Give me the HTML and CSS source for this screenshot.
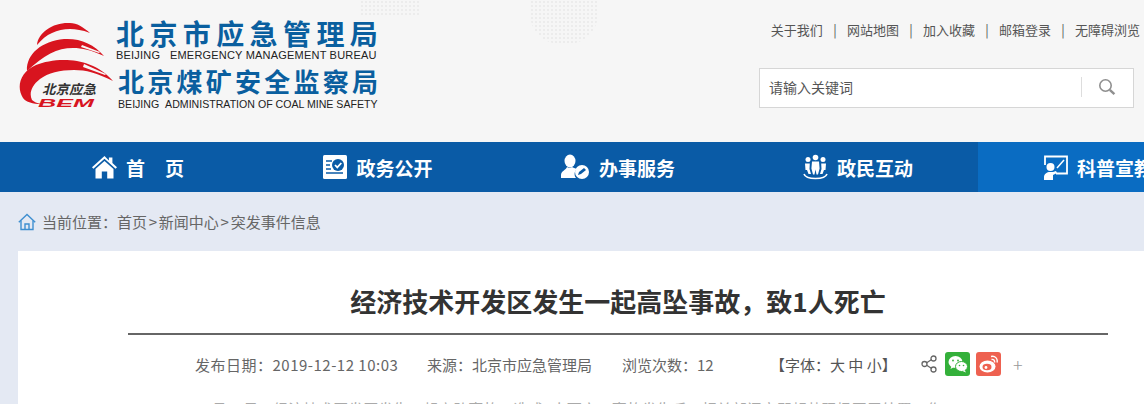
FILE: index.html
```html
<!DOCTYPE html>
<html lang="zh-CN">
<head>
<meta charset="utf-8">
<title>经济技术开发区发生一起高坠事故&#xFF0C;致1人死亡</title>
<link rel="stylesheet" href="styles.css">
</head>
<body>
<div class="page">
  <header class="header">
    <span class="dots dots-a"></span>
    <span class="dots dots-b"></span>
    <div class="brand">
      <svg class="brand-mark" width="96" height="88" viewBox="0 0 96 88">
        <path fill="#d8141f" d="M19 23C20 10 36 0 52 1c7 0 13 4 20 10-8-3-14-4-20-4-13 0-24 5-33 16z"/>
        <path fill="#d8141f" d="M9 49C8 32 24 19 46 17c16-1 30 5 40 17-13-6-22-8-31-8-16 0-29 7-46 23z"/>
        <path fill="#d8141f" d="M5 76C-2 65 2 50 18 43c20-8 56-9 77 16-16-8-27-11-39-11-14 0-26 3-34 9-9 7-11 15-8 21 2 2 5 3 9 4C15 82 8 80 5 76z"/>
        <path fill="#f6f6f6" d="M64 23l18 7-1 1-18-6zM66 42l22 10-1 1-22-8z"/>
        <text class="mark-cn" x="24" y="72" textLength="54" lengthAdjust="spacingAndGlyphs">北京应急</text>
        <text class="mark-en" x="20" y="85" textLength="56" lengthAdjust="spacingAndGlyphs">BEM</text>
      </svg>
      <div class="brand-text">
        <div class="brand-cn">北京市应急管理局</div>
        <div class="brand-en">BEIJING&nbsp;&nbsp;&nbsp;EMERGENCY MANAGEMENT BUREAU</div>
        <div class="brand-cn brand-cn-two">北京煤矿安全监察局</div>
        <div class="brand-en brand-en-two">BEIJING&nbsp;&nbsp;ADMINISTRATION OF COAL MINE SAFETY</div>
      </div>
    </div>
    <div class="tools">
      <nav class="links">
        <a>关于我们</a><i>|</i><a>网站地图</a><i>|</i><a>加入收藏</a><i>|</i><a>邮箱登录</a><i>|</i><a>无障碍浏览</a>
      </nav>
      <div class="search">
        <span class="search-text">请输入关键词</span>
        <span class="search-btn">
          <svg width="18" height="18" viewBox="0 0 18 18" fill="none" stroke="#8f8f8f">
            <circle cx="7.500" cy="7.500" r="5.700" stroke-width="1.600"/>
            <path d="M11.800 11.800l4.600 4.400" stroke-width="2.400"/>
          </svg>
        </span>
      </div>
    </div>
  </header>

  <nav class="nav">
    <a class="nav-item">
      <svg width="25" height="24" viewBox="0 0 25 24" fill="#fff">
        <path d="M12.500 1L0 12.200l1.400 1.500L12.500 3.800l11.100 9.900 1.400-1.500-4.600-4.100V2.500h-3.500v2.900z"/>
        <path d="M12.500 6L3.500 14v9.500h6.300v-7h5.400v7h6.300V14z"/>
      </svg>
      <span class="wide">首页</span>
    </a>
    <a class="nav-item">
      <svg width="24" height="24" viewBox="0 0 24 24">
        <rect width="24" height="24" rx="1.500" fill="#fff"/>
        <path d="M3 6h6M3 10h4M3 14h5M3 18h17" stroke="#0a5ba6" stroke-width="1.700" fill="none"/>
        <circle cx="15" cy="10" r="6" fill="#0a5ba6"/>
        <path d="M12 10l2.300 2.400 4-4.400" stroke="#fff" stroke-width="1.800" fill="none"/>
      </svg>
      <span>政务公开</span>
    </a>
    <a class="nav-item">
      <svg width="29" height="26" viewBox="0 0 29 26" fill="#fff">
        <ellipse cx="9" cy="7" rx="5.500" ry="6.500"/>
        <path d="M6 13c-1 3-6 4-6 8v3h15c-2-2-2-7 1-9-2-1-4-1-5-2-1 1-4 1-5 0z"/>
        <circle cx="21" cy="18" r="7"/>
        <path d="M17 21l1-3 5-4 2 2-5 4z" fill="#0a5ba6"/>
      </svg>
      <span>办事服务</span>
    </a>
    <a class="nav-item">
      <svg width="25" height="26" viewBox="0 0 25 26" fill="#fff">
        <circle cx="12.500" cy="3.500" r="2.800"/>
        <circle cx="5" cy="5.500" r="2.500"/>
        <circle cx="20" cy="5.500" r="2.500"/>
        <path d="M9 7.500h7l.6 7-1.600 6h-1.500l-1-5-1 5H10l-1.600-6zM2 9.500h4.800L6.500 15 8 20H5.500L4 16H2.500zM23 9.500h-4.800l.3 5.500-1.500 5h2.500l1.500-4h1.500z"/>
        <path d="M1 20c2 6 21 6 23 0" fill="none" stroke="#fff" stroke-width="1.600"/>
      </svg>
      <span>政民互动</span>
    </a>
    <a class="nav-item nav-item-active">
      <svg width="25" height="25" viewBox="0 0 25 25" fill="none">
        <path d="M2 10V1.500h22v17H13" stroke="#fff" stroke-width="1.800"/>
        <path d="M14 13l7-8" stroke="#fff" stroke-width="1.500"/>
        <circle cx="7.500" cy="12" r="4" fill="#fff"/>
        <path d="M1 25v-3c0-3 3-5 6-5 2 0 4 0 6-1l1 2-4 2v5z" fill="#fff"/>
      </svg>
      <span>科普宣教</span>
    </a>
  </nav>

  <div class="crumb">
    <svg width="18" height="18" viewBox="0 0 18 18" fill="none" stroke="#3f8fd0" stroke-width="1.400">
      <path d="M.8 9.200L9 1.500l8.200 7.700"/>
      <path d="M3 7.500v9h12v-9"/>
      <path d="M7 16.500v-5.500h4v5.500"/>
    </svg>
    <span>当前位置&#xFF1A;首页<i class="gt">&gt;</i>新闻中心<i class="gt">&gt;</i>突发事件信息</span>
  </div>

  <main class="card">
    <h1 class="title">经济技术开发区发生一起高坠事故&#xFF0C;致1人死亡</h1>
    <div class="meta">
      <span class="meta-date">发布日期&#xFF1A;2019-12-12 10:03</span>
      <span class="meta-source">来源&#xFF1A;北京市应急管理局</span>
      <span class="meta-views">浏览次数&#xFF1A;12</span>
      <span class="meta-font">【字体&#xFF1A;大 中 小】</span>
      <svg class="share" width="16" height="18" viewBox="0 0 16 18" fill="none" stroke="#666" stroke-width="1.300">
        <circle cx="3.500" cy="9" r="2.500"/>
        <circle cx="12.500" cy="3.500" r="2.500"/>
        <circle cx="12.500" cy="14.500" r="2.500"/>
        <path d="M5.700 7.700l4.600-2.900M5.700 10.300l4.600 2.900"/>
      </svg>
      <span class="social social-wechat">
        <svg width="20" height="18" viewBox="0 0 20 18" fill="#fff">
          <ellipse cx="7.500" cy="7" rx="7" ry="6"/>
          <path d="M3.500 11l-1 3 3.500-2z"/>
          <ellipse cx="13.500" cy="11.500" rx="6" ry="5" stroke="#34b03a"/>
          <path d="M16.500 15l1.500 2.500-3.500-1.500z"/>
          <circle cx="5" cy="5.500" r=".9" fill="#34b03a"/>
          <circle cx="10" cy="5.500" r=".9" fill="#34b03a"/>
          <circle cx="11.500" cy="10.500" r=".8" fill="#34b03a"/>
          <circle cx="15.500" cy="10.500" r=".8" fill="#34b03a"/>
        </svg>
      </span>
      <span class="social social-weibo">
        <svg width="20" height="18" viewBox="0 0 20 18" fill="none">
          <ellipse cx="8.500" cy="11.500" rx="8" ry="6" fill="#fff"/>
          <ellipse cx="8" cy="12" rx="4.500" ry="3.300" fill="#ee6150"/>
          <circle cx="7" cy="12.500" r="1.400" fill="#fff"/>
          <path d="M12 1.500c4-1 7 2 6 6M12.500 4.500c2-.5 3.500 1 3 3" stroke="#fff" stroke-width="1.400"/>
        </svg>
      </span>
      <span class="more">+</span>
    </div>
    <p class="body-text">12月12日&#xFF0C;经济技术开发区发生一起高坠事故&#xFF0C;造成1人死亡。事故发生后&#xFF0C;相关部门立即赶赴现场开展处置工作。</p>
  </main>
</div>
</body>
</html>
```
FILE: styles.css
```css
* { box-sizing: border-box; }
html, body { margin: 0; padding: 0; height: 100%; overflow: hidden; }
body { font-family: "Noto Sans CJK SC", "Liberation Sans", sans-serif; color: #555; background: #e4e9f3; }
.page { width: 1144px; height: 404px; overflow: hidden; }

.header {
  position: relative;
  height: 142px;
  background: #f6f6f6;
  display: flex;
  justify-content: space-between;
  padding: 0 4px 0 18px;
}
.dots {
  position: absolute;
  background-image: radial-gradient(circle, #ececec 1px, transparent 1.2px);
  background-size: 4px 4px;
}
.dots-a { left: 360px; top: 0; width: 60px; height: 15px; }
.dots-b { left: 530px; top: 0; width: 68px; height: 44px; border-radius: 0 0 30px 30px; }

.brand { position: relative; display: flex; align-items: flex-start; padding-top: 18px; }
.brand-mark { margin: 4px 2px 0 0; flex: none; }
.mark-cn { font-size: 13px; font-style: italic; font-weight: 700; fill: #333; }
.mark-en { font-family: "Liberation Sans", sans-serif; font-size: 11px; font-style: italic; font-weight: 700; fill: #d8141f; }
.brand-text { display: flex; flex-direction: column; width: 262px; }
.brand-cn {
  font-size: 28px;
  line-height: 30px;
  font-weight: 700;
  color: #0a5f9f;
  letter-spacing: 5.400px;
  white-space: nowrap;
}
.brand-en {
  font-family: "Liberation Sans", sans-serif;
  font-size: 11px;
  line-height: 14px;
  color: #222;
  white-space: nowrap;
  letter-spacing: .2px;
}
.brand-cn-two { font-size: 26px; margin: 3px 0 0 2px; letter-spacing: 3.250px; line-height: 32px; }
.brand-en-two { margin: 0 0 0 2px; font-size: 10.600px; letter-spacing: 0; }

.tools { position: relative; display: flex; flex-direction: column; align-items: flex-end; padding-top: 20px; }
.links { display: flex; gap: 10.250px; font-size: 13px; line-height: 20px; color: #555; white-space: nowrap; }
.links i { font-style: normal; }
.search {
  width: 375px;
  height: 40px;
  margin: 28px 6px 0 0;
  background: #fff;
  border: 1px solid #d6d6d6;
  display: flex;
  align-items: center;
  justify-content: space-between;
  padding: 0 0 2px 9px;
  font-size: 14px;
  color: #555;
}
.search-btn {
  width: 51px;
  height: 20px;
  border-left: 1px solid #ddd;
  display: flex;
  align-items: center;
  justify-content: center;
  margin-right: 1px;
}

.nav {
  height: 50px;
  width: 1144px;
  background: #0a5ba6;
  display: flex;
  padding-left: 18px;
  overflow: hidden;
}
.nav-item {
  flex: none;
  width: 240px;
  display: flex;
  align-items: center;
  justify-content: center;
  gap: 9px;
  color: #fff;
  font-size: 19px;
  font-weight: 700;
  white-space: nowrap;
}
.nav-item .wide { letter-spacing: 20px; margin-right: -20px; }
.nav-item-active { background: #0a6cc2; }

.crumb {
  height: 59px;
  display: flex;
  align-items: center;
  gap: 6px;
  padding-left: 18px;
  font-size: 15px;
  color: #666;
}
.gt { font-style: normal; padding: 0 1.750px; }

.card { width: 1200px; margin-left: 18px; height: 200px; background: #fff; padding: 29px 110px 0; }
.title {
  margin: 0;
  height: 53px;
  font-size: 26px;
  line-height: 42px;
  font-weight: 700;
  color: #333;
  text-align: center;
  white-space: nowrap;
}
.meta {
  border-top: 2px solid #666;
  height: 60px;
  display: flex;
  align-items: center;
  padding-left: 67px;
  font-size: 15px;
  color: #666;
  white-space: nowrap;
}
.meta-date { width: 232px; letter-spacing: .5px; }
.meta-source { width: 195px; }
.meta-views { width: 148px; }
.meta-font { width: 151px; color: #555; }
.share { flex: none; margin-right: 8px; }
.social { width: 25px; height: 24px; border-radius: 3px; display: flex; align-items: center; justify-content: center; margin-right: 6px; }
.social-wechat { background: #34b03a; }
.social-weibo { background: #ee6150; }
.more { margin-left: 6px; font-size: 18px; font-weight: 300; color: #999; }
.body-text { margin: 6px 0 0 67px; font-size: 15px; line-height: 20px; color: #aaa; white-space: nowrap; }
```
